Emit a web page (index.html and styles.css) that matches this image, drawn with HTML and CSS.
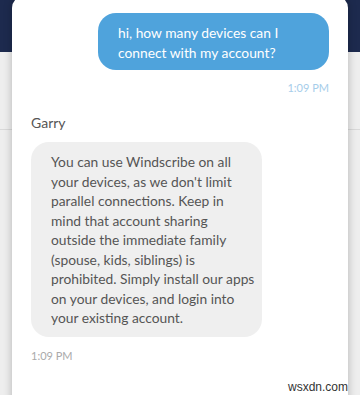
FILE: index.html
```html
<!DOCTYPE html>
<html>
<head>
<meta charset="utf-8">
<link rel="stylesheet" href="styles.css">
</head>
<body>
<div class="page">
  <div class="card">
    <div class="msg msg-out">
      <div class="bubble bubble-out">hi, how many devices can I connect with my account?</div>
      <div class="time time-out">1:09 PM</div>
    </div>
    <div class="msg msg-in">
      <div class="sender">Garry</div>
      <div class="bubble bubble-in">You can use Windscribe on all<br>your devices, as we don't limit<br>parallel connections. Keep in<br>mind that account sharing<br>outside the immediate family<br>(spouse, kids, siblings) is<br>prohibited. Simply install our apps<br>on your devices, and login into<br>your existing account.</div>
      <div class="time time-in">1:09 PM</div>
    </div>
  </div>
  <div class="watermark">wsxdn.com</div>
</div>
</body>
</html>
```
FILE: styles.css
```css
html, body {
  margin: 0;
  padding: 0;
}
body {
  width: 360px;
  height: 395px;
  overflow: hidden;
  font-family: Lato, "Open Sans", sans-serif;
}
.page {
  position: relative;
  height: 395px;
  overflow: hidden;
  background:
    linear-gradient(to bottom, #1d2a4e 0, #1d2a4e 52px, transparent 52px),
    linear-gradient(to bottom, transparent 129px, #d9d9d9 129px, #d9d9d9 130px, transparent 130px),
    #eeeeee;
}
.card {
  margin: -4px 12px 0;
  height: 420px;
  background: #ffffff;
  border-radius: 12px 12px 0 0;
  box-shadow: 0 0 8px rgba(0, 0, 0, 0.25);
  padding: 17px 19px 0;
  box-sizing: border-box;
  display: flex;
  flex-direction: column;
}
.msg {
  display: flex;
  flex-direction: column;
}
.msg-out {
  align-items: flex-end;
}
.msg-in {
  align-items: flex-start;
  margin-top: 19px;
}
.bubble {
  width: 231px;
  box-sizing: border-box;
  padding: 10px 20px 9px 20px;
  border-radius: 18px;
  font-size: 13.8px;
  line-height: 19.5px;
}
.bubble-out {
  background: #4fa3dc;
  color: #ffffff;
  padding-bottom: 8px;
}
.bubble-in {
  background: #efefef;
  color: #555555;
  padding-top: 10px;
  padding-bottom: 9px;
  padding-right: 6px;
  white-space: nowrap;
}
.time {
  font-size: 11px;
  line-height: 14px;
  margin-top: 11px;
}
.time-out {
  color: #a6cdea;
}
.time-in {
  color: #aaaaaa;
  margin-top: 12px;
}
.sender {
  font-size: 14px;
  line-height: 18px;
  color: #555555;
  margin-bottom: 10px;
}
.watermark {
  position: absolute;
  right: 12px;
  bottom: 1px;
  font-family: "Liberation Sans", Arial, sans-serif;
  font-size: 12px;
  color: #333333;
}
```
